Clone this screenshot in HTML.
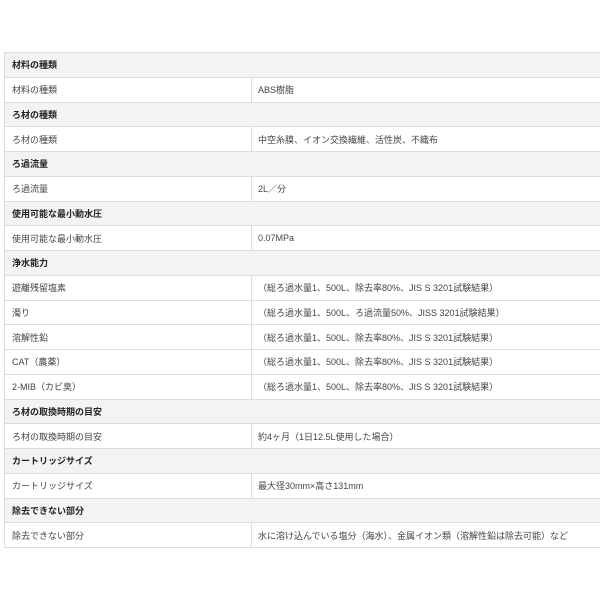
<!DOCTYPE html>
<html><head><meta charset="utf-8"><style>
body{margin:0;background:#fff;width:600px;height:600px;overflow:hidden;font-family:"Liberation Sans","Noto Sans CJK JP",sans-serif;}
table{position:absolute;left:4px;top:52px;width:620px;border-collapse:collapse;font-size:9px;color:#444;}
td{border:1px solid #ddd;height:24.75px;padding:0 0 0 7px;box-sizing:border-box;white-space:nowrap;}
tr.h td{background:#f3f3f3;font-weight:bold;color:#222;}
td.l{width:247px;}
td.r{padding-left:6px;}
</style></head><body>
<table>
<tr class="h"><td colspan="2">材料の種類</td></tr>
<tr><td class="l">材料の種類</td><td class="r">ABS樹脂</td></tr>
<tr class="h"><td colspan="2">ろ材の種類</td></tr>
<tr><td class="l">ろ材の種類</td><td class="r">中空糸膜、イオン交換繊維、活性炭、不織布</td></tr>
<tr class="h"><td colspan="2">ろ過流量</td></tr>
<tr><td class="l">ろ過流量</td><td class="r">2L／分</td></tr>
<tr class="h"><td colspan="2">使用可能な最小動水圧</td></tr>
<tr><td class="l">使用可能な最小動水圧</td><td class="r">0.07MPa</td></tr>
<tr class="h"><td colspan="2">浄水能力</td></tr>
<tr><td class="l">遊離残留塩素</td><td class="r">（総ろ過水量1、500L、除去率80%、JIS S 3201試験結果）</td></tr>
<tr><td class="l">濁り</td><td class="r">（総ろ過水量1、500L、ろ過流量50%、JISS 3201試験結果）</td></tr>
<tr><td class="l">溶解性鉛</td><td class="r">（総ろ過水量1、500L、除去率80%、JIS S 3201試験結果）</td></tr>
<tr><td class="l">CAT（農薬）</td><td class="r">（総ろ過水量1、500L、除去率80%、JIS S 3201試験結果）</td></tr>
<tr><td class="l">2-MIB（カビ臭）</td><td class="r">（総ろ過水量1、500L、除去率80%、JIS S 3201試験結果）</td></tr>
<tr class="h"><td colspan="2">ろ材の取換時期の目安</td></tr>
<tr><td class="l">ろ材の取換時期の目安</td><td class="r">約4ヶ月（1日12.5L使用した場合）</td></tr>
<tr class="h"><td colspan="2">カートリッジサイズ</td></tr>
<tr><td class="l">カートリッジサイズ</td><td class="r">最大径30mm×高さ131mm</td></tr>
<tr class="h"><td colspan="2">除去できない部分</td></tr>
<tr><td class="l">除去できない部分</td><td class="r">水に溶け込んでいる塩分（海水）、金属イオン類（溶解性鉛は除去可能）など</td></tr>
</table>
</body></html>
